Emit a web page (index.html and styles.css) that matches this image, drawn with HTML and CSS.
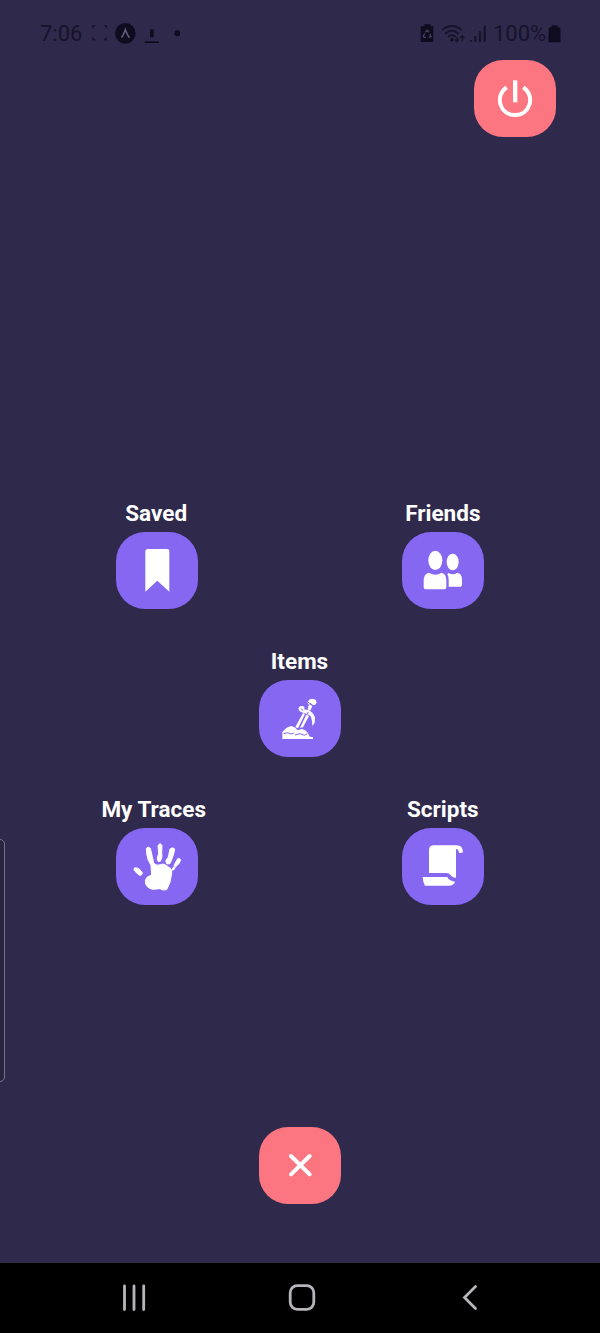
FILE: index.html
```html
<!DOCTYPE html>
<html lang="en">
<head>
<meta charset="utf-8">
<title>Menu</title>
<link rel="stylesheet" href="styles.css">
</head>
<body>
<div class="screen">
  <header class="status">
    <div class="status-left">
      <span class="clock">7:06</span>
      <svg class="notices" viewBox="0 0 270 90">
        <path class="line" d="M9 24V17H16M42 17H49V24M49 52V59H42M16 59H9V52" stroke-width="4"/>
        <circle cx="106" cy="40" r="31"/>
        <path class="cutout" d="M95 53Q101 43 106 29Q111 43 118 53"/>
        <path d="M180 28H191V52H180ZM164 64H206V69H164Z"/>
        <circle cx="262" cy="40" r="9"/>
      </svg>
    </div>
    <div class="status-right">
      <svg class="signals" viewBox="0 0 210 90">
        <path d="M12 18Q12 15 15 15H19V10H38V15H42Q46 15 46 19V59Q46 63 42 63H12Q8 63 8 59V19Q8 15 12 15Z"/>
        <path class="cutout thin" d="M22 34L27 28L33 34M36 39L39 47L32 49M24 49H18L16 45L20 38"/>
        <path class="line" d="M72 27Q102 3 131 27M81 38Q102 20 122 38M90 48Q102 38 113 48" stroke-width="6"/>
        <circle cx="102" cy="56" r="5"/>
        <path class="line" d="M117 47V59M111 55L117 62L123 55M133 61V46M127 51L133 44L139 51" stroke-width="4"/>
        <path class="line" d="M159 62V57M172 62V45M186 62V31M200 62V14" stroke-width="7"/>
      </svg>
      <span class="percent">100%</span>
      <svg class="battery" viewBox="0 0 38 54"><path d="M10 1H28V7H32Q37 7 37 12V52H1V12Q1 7 6 7H10Z"/></svg>
    </div>
  </header>
  <div class="top">
    <button class="tile coral" aria-label="Log out">
      <svg viewBox="42 30 246 231"><path class="stroke" d="M140 112C103 137 119 195 165 195C211 195 227 137 190 112" stroke-width="12"/><path d="M159 91H172V157H159Z"/></svg>
    </button>
  </div>
  <main class="menu">
    <div class="item saved"><span class="label">Saved</span>
      <button class="tile" aria-label="Saved"><svg viewBox="78 126 246 231"><path d="M166 184Q166 177 173 177H231Q238 177 238 184V305L202 272L166 305Z"/></svg></button>
    </div>
    <div class="item friends"><span class="label">Friends</span>
      <button class="tile" aria-label="Friends"><svg viewBox="36 126 246 231">
        <ellipse cx="136" cy="211" rx="21" ry="29"/><ellipse cx="188" cy="216" rx="18" ry="25"/>
        <path d="M117 248Q136 260 155 248Q169 251 169 273V292Q169 298 163 298H107Q101 298 101 292V273Q101 251 117 248Z"/>
        <path d="M172 252L176 249Q189 257 202 248Q216 251 216 269V285Q216 290 211 290H176V270Q176 260 172 252Z"/>
      </svg></button>
    </div>
    <div class="item items"><span class="label">Items</span>
      <button class="tile" aria-label="Items"><svg viewBox="42 105 246 231">
        <path d="M187 174L192 164L201 161L212 164L215 173L210 180L202 179L197 174L193 180Z"/>
        <path d="M192 178L202 183L196 197L188 193Z"/>
        <path d="M160 190L165 184L174 183L179 188L177 193L192 196L203 204L210 216L209 233L202 243L201 228L197 213L184 206L170 202L163 198Z"/>
        <path d="M174 204L180 207L159 250L151 246ZM184 209L192 213L174 247L165 249Z"/>
        <path d="M112 282V261L125 248L138 243L149 247L158 256L170 252L180 255L189 264L194 275L204 276V282Z"/>
        <path class="crease" d="M115 266L128 263L138 267L147 264M150 270L165 266L178 271L187 266"/>
        <path class="crease" d="M188 171L199 178M168 190L174 197M190 201L187 207"/>
      </svg></button>
    </div>
    <div class="item traces"><span class="label">My Traces</span>
      <button class="tile" aria-label="My Traces"><svg class="print" viewBox="78 114 246 231">
        <path d="M169 175Q174 168 181 175L187 200L191 220Q200 229 212 224Q218 220 225 224L240 234Q247 239 245 250L240 277L230 299L218 300L210 296L187 298Q171 294 167 282Q163 270 172 261L185 255L183 226L175 211Q169 195 169 175Z"/>
        <path d="M204 168Q210 155 216 167L215 189Q217 196 215 205L211 214H204L202 204L206 190Z"/>
        <path d="M240 177Q247 170 254 177L252 188L247 204L240 221L231 222L227 213L235 201Z"/>
        <path d="M263 206Q271 204 272 211L266 222L257 230L252 226ZM251 230L256 232L251 240L246 240Z"/>
        <path d="M133 234Q139 232 148 237L157 248Q157 257 148 256L139 248L132 240Z"/>
      </svg></button>
    </div>
    <div class="item scripts"><span class="label">Scripts</span>
      <button class="tile" aria-label="Scripts"><svg viewBox="36 114 246 231">
        <path d="M117 249V181Q117 166 132 166H201Q218 166 219 187Q213 191 207 188Q206 178 198 177V263Q190 264 184 258Q179 249 170 249Z"/>
        <path d="M98 261H172Q176 272 195 275Q191 287 177 287H105Q99 277 98 261Z"/>
      </svg></button>
    </div>
  </main>
  <div class="bottom">
    <button class="tile coral" aria-label="Close"><svg viewBox="42 35 246 231"><path class="stroke" stroke-linecap="round" d="M138 122L194 177M194 122L138 177" stroke-width="12"/></svg></button>
  </div>
  <nav class="navbar">
    <svg viewBox="0 0 600 70"><path d="M124.500 23V46.500M134 23V46.500M143.700 23V46.500M475.500 23.500L464.500 34.500L475.500 45.500"/><rect x="290.200" y="22.700" width="23.600" height="23.600" rx="7"/></svg>
  </nav>
  <div class="edge-handle"></div>
</div>
</body>
</html>
```
FILE: styles.css
```css
* { box-sizing: border-box; }
body { margin: 0; background: #2f294b; font-family: Roboto, "Noto Sans", sans-serif; }
.screen { position: relative; height: 1333px; display: flex; flex-direction: column; background: #2f294b; overflow: hidden; }
.status { height: 60px; padding: 10px 39px 0 40px; display: flex; justify-content: space-between; color: #17132b; font-size: 22px; line-height: 48px; flex: none; }
.status-left, .status-right { display: flex; align-items: flex-start; }
.status svg { fill: #0f0c20; flex: none; }
.clock { width: 50px; }
.notices { width: 90px; height: 30px; margin-top: 10px; }
.signals { width: 70px; height: 30px; margin: 11px 5px 0 0; }
.percent { width: 53px; white-space: nowrap; }
.battery { width: 13px; height: 18px; margin: 15px 0 0 2px; }
.status .line { fill: none; stroke: #17132b; }
.cutout { fill: none; stroke: #625a78; stroke-width: 5; }
.cutout.thin { stroke: #494163; stroke-width: 4; }
.top { display: flex; justify-content: flex-end; padding-right: 44px; height: 77px; flex: none; }
.tile { display: block; width: 82px; height: 77px; padding: 0; border: 0; border-radius: 29px; background: #8567f1; flex: none; }
.tile svg { display: block; width: 82px; height: 77px; fill: #fff; }
.coral { background: #fc7682; }
.tile .stroke { fill: none; stroke: #fff; }
.tile .crease { fill: none; stroke: #8567f1; stroke-width: 3; }
.print { stroke: #fff; stroke-width: 3; stroke-linejoin: round; }
.menu { margin: 363px auto 0; width: 430px; display: grid; grid-template-columns: repeat(3, 1fr); grid-template-rows: 148px 148px 109px; flex: none; }
.item { display: flex; flex-direction: column; align-items: center; }
.label { height: 32px; line-height: 27px; padding-right: 1px; font-size: 22.500px; font-weight: 700; color: #fff; white-space: nowrap; }
.saved { grid-area: 1 / 1; }
.friends { grid-area: 1 / 3; }
.items { grid-area: 2 / 2; }
.traces { grid-area: 3 / 1; }
.traces .label { padding-right: 6px; }
.scripts { grid-area: 3 / 3; }
.bottom { display: flex; justify-content: center; margin-top: 222px; }
.navbar { height: 70px; margin-top: auto; background: #000; flex: none; }
.navbar svg { display: block; width: 600px; height: 70px; fill: none; stroke: #b8b4bb; stroke-width: 2.800; stroke-linecap: round; }
.edge-handle { position: absolute; left: -8px; top: 839px; width: 13px; height: 243px; border: 1px solid #77728a; border-radius: 5px; background: #292440; }
```
